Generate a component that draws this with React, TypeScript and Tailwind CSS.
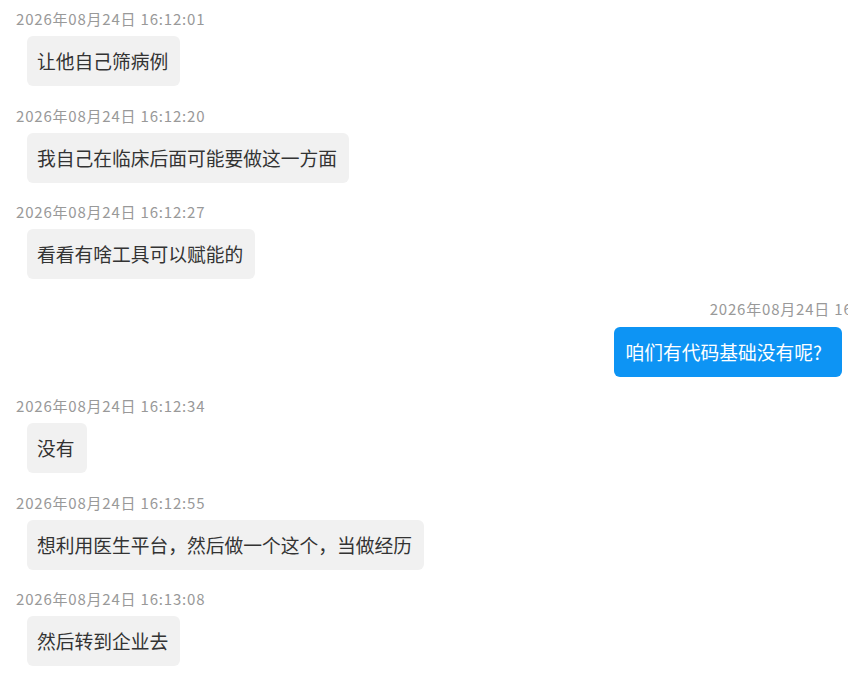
import React from 'react';

type Msg = { time: string; text: string; mine?: boolean };

const messages: Msg[] = [
  { time: '2026年08月24日 16:12:01', text: '让他自己筛病例' },
  { time: '2026年08月24日 16:12:20', text: '我自己在临床后面可能要做这一方面' },
  { time: '2026年08月24日 16:12:27', text: '看看有啥工具可以赋能的' },
  { time: '2026年08月24日 16:12:31', text: '咱们有代码基础没有呢?', mine: true },
  { time: '2026年08月24日 16:12:34', text: '没有' },
  { time: '2026年08月24日 16:12:55', text: '想利用医生平台，然后做一个这个，当做经历' },
  { time: '2026年08月24日 16:13:08', text: '然后转到企业去' },
];

function Bubble({ msg }: { msg: Msg }) {
  if (msg.mine) {
    return (
      <div className="flex flex-col items-end mb-[19.5px]">
        <div className="text-[15px] leading-[20px] tracking-[0.8px] text-[#999999] whitespace-nowrap pr-[6px]">{msg.time}</div>
        <div className="mt-[8px] mr-[63px] rounded-[6px] bg-[#0d94f4] text-white text-[18.75px] leading-[30px] pl-[12px] pr-[20px] py-[10px]">
          {msg.text}
        </div>
      </div>
    );
  }
  return (
    <div className="flex flex-col items-start mb-[19.5px]">
      <div className="pl-[16px] text-[15px] leading-[20px] tracking-[0.8px] text-[#999999] whitespace-nowrap">{msg.time}</div>
      <div className="ml-[27px] mt-[7px] rounded-[6px] bg-[#f1f1f1] text-[#333333] text-[18.75px] leading-[30px] pl-[10px] pr-[12px] py-[10px]">
        {msg.text}
      </div>
    </div>
  );
}

export default function App() {
  return (
    <div className="w-[848px] h-[679px] overflow-hidden bg-white font-['Noto_Sans_CJK_SC','Noto_Sans',sans-serif]">
      <div className="w-[905px] pt-[9px]">
        {messages.map((m, i) => (
          <Bubble key={i} msg={m} />
        ))}
      </div>
    </div>
  );
}
